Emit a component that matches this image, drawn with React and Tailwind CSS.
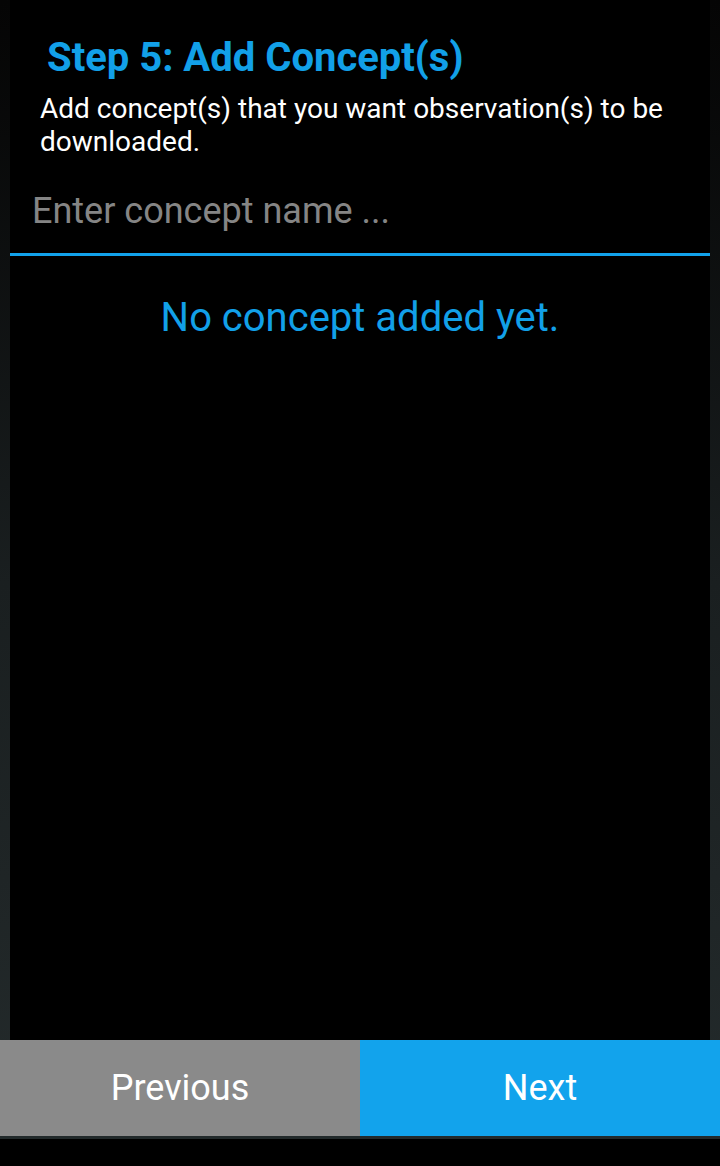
import React, { useState } from "react";

const App = () => {
  const [concept, setConcept] = useState("");
  const [concepts] = useState([]);

  return (
    <div
      className="w-[720px] h-[1166px] flex flex-col bg-gradient-to-b from-[#050505] via-[#1a1f20] to-[#242b2c]"
      style={{ fontFamily: "Roboto, 'Noto Sans', sans-serif" }}
    >
      <div className="flex-1 mx-[10px] bg-black flex flex-col">
        <h1 className="text-[40px] leading-[46px] font-bold text-[#12a0e8] pl-[37px] pt-[35px]">
          Step 5: Add Concept(s)
        </h1>
        <p className="text-[28px] leading-[33px] text-white pl-[30px] pr-[20px] mt-[11px]">
          Add concept(s) that you want observation(s) to be downloaded.
        </p>
        <input
          className="h-[98px] bg-transparent text-[36px] text-white placeholder-[#858585] px-[22px] pt-[10px] border-b-[3px] border-[#12a2eb] outline-none"
          placeholder="Enter concept name ..."
          value={concept}
          onChange={(e) => setConcept(e.target.value)}
        />
        {concepts.length === 0 && (
          <p className="text-center text-[40px] leading-[47px] text-[#12a0e8] mt-[38px]">
            No concept added yet.
          </p>
        )}
      </div>
      <div className="flex h-[96px]">
        <button className="w-1/2 bg-[#8a8a8a] text-white text-[36px]">Previous</button>
        <button className="w-1/2 bg-[#12a3ec] text-white text-[36px]">Next</button>
      </div>
      <div className="h-[3px] bg-[#222a2b]" />
      <div className="h-[27px] bg-black" />
    </div>
  );
};

export default App;
